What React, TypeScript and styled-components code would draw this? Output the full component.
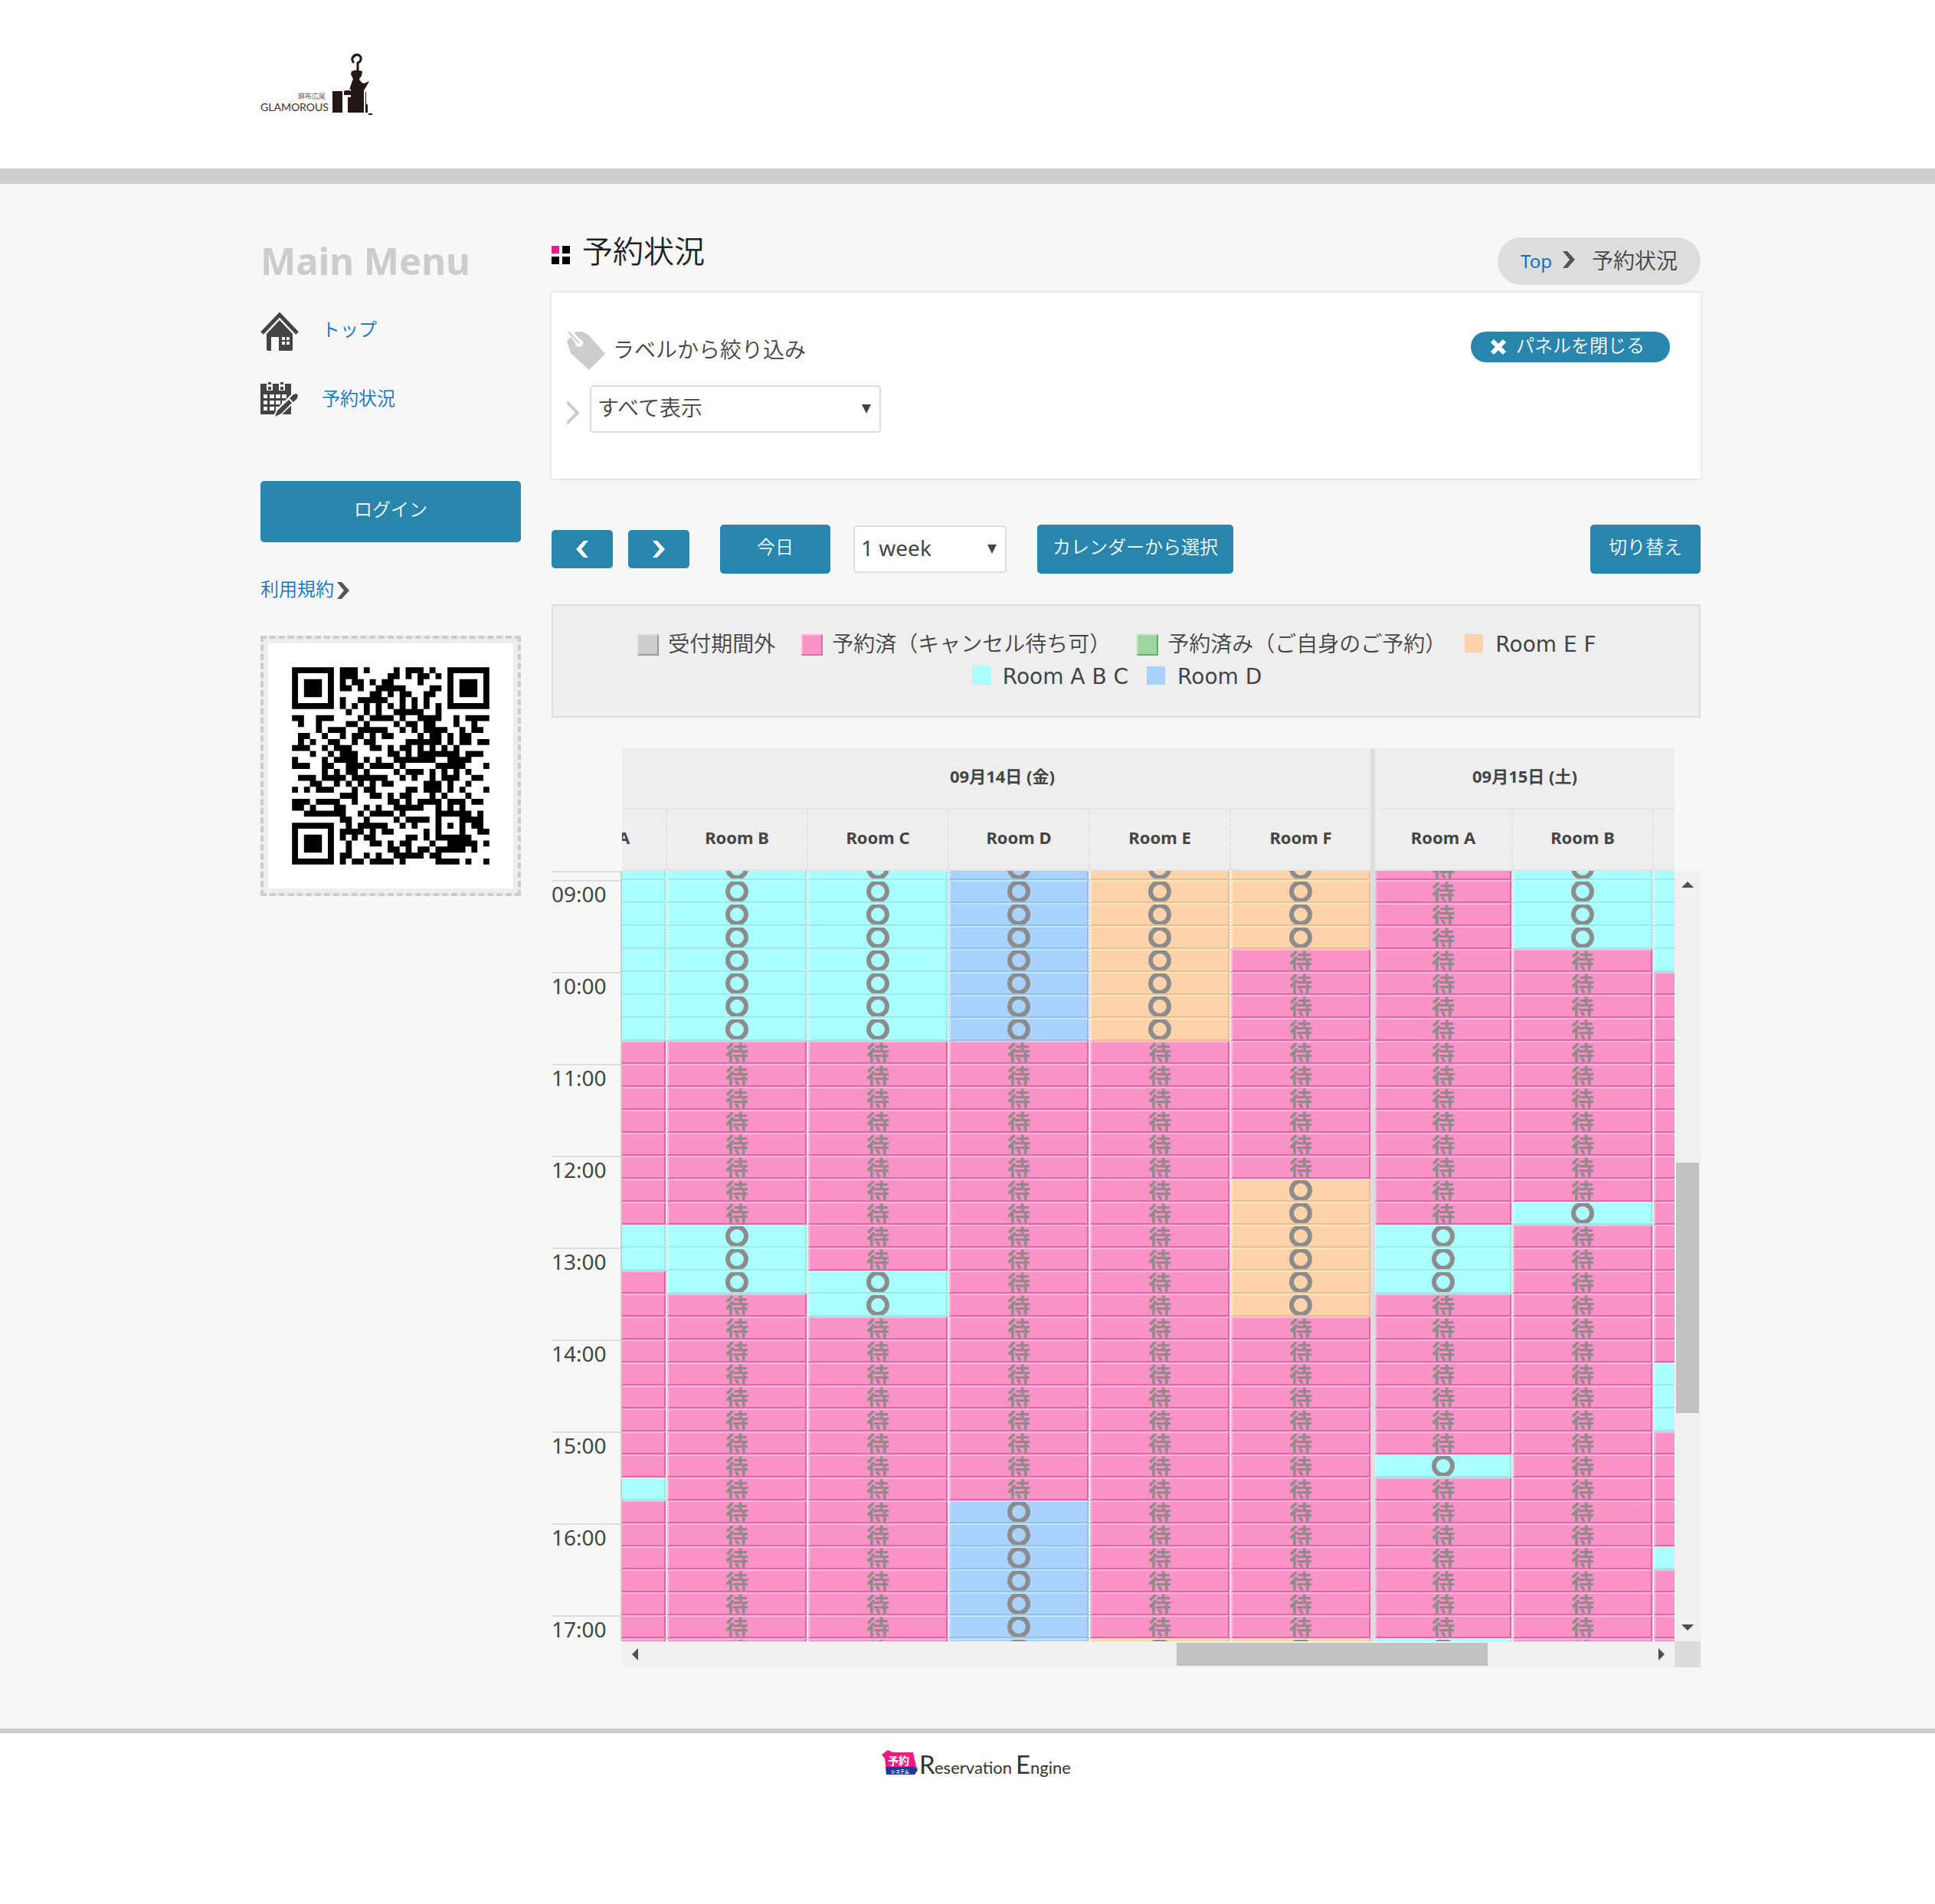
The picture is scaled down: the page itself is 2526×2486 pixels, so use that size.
import React, { useLayoutEffect, useRef } from "react";
import styled, { createGlobalStyle, css } from "styled-components";

const sans = `"Noto Sans", "Noto Sans CJK JP", sans-serif`;
const jp = `"Noto Sans CJK JP", "Noto Sans", sans-serif`;
const wide = `"DejaVu Sans", "Noto Sans CJK JP", sans-serif`;

const GlobalStyle = createGlobalStyle`
  *, *::before, *::after { box-sizing: border-box; }
  body {
    margin: 0;
    background: #fff;
    color: #444;
    font-family: ${sans};
    font-size: 24px;
    line-height: 36px;
  }
  ul, h1, h2, p { margin: 0; padding: 0; }
  ul { list-style: none; }
  svg { display: block; flex: none; }
`;

/* ---------- page frame ---------- */

const Frame = styled.div`
  width: 100%;
  max-width: 1914px;
  margin: 0 auto;
  padding-left: 34px;
`;

const Header = styled.header`
  padding: 70px 0 68px;
  border-bottom: 20px solid #ccc;
`;

const Content = styled.div`
  background: #f7f7f7;
  padding: 70px 0 80px;
`;

const Columns = styled.div`
  display: flex;
  align-items: flex-start;
  gap: 40px;
`;

const Footer = styled.footer`
  border-top: 6px solid #ccc;
  padding: 20px 0 150px;
  display: flex;
  justify-content: center;
`;

const FooterLink = styled.a`
  margin-left: 24px;
`;

/* ---------- sidebar ---------- */

const Sidebar = styled.aside`
  flex: none;
  width: 340px;
`;

const MenuTitle = styled.h2`
  font-size: 49px;
  line-height: 60px;
  color: #ccc;
  font-weight: 700;
`;

const MenuList = styled.ul`
  margin-top: 38px;
  display: grid;
  gap: 40px;
`;

const MenuLink = styled.a`
  display: flex;
  gap: 30px;
  height: 50px;
  color: #0a73c8;
  font-family: ${jp};
  font-weight: 350;
  line-height: 42px;
  text-decoration: none;
`;

const LoginButton = styled.button`
  display: block;
  width: 100%;
  height: 80px;
  margin-top: 80px;
  padding: 0 0 10px;
  border: 0;
  border-radius: 5px;
  background: #2885ac;
  color: #fff;
  font-family: ${jp};
  font-weight: 350;
  font-size: 24px;
`;

const TermsLink = styled.a`
  display: flex;
  align-items: center;
  gap: 4px;
  margin-top: 42px;
  color: #0a73c8;
  font-family: ${jp};
  font-weight: 350;
  text-decoration: none;

  svg { margin-top: 6px; }
`;

const QrFrame = styled.div`
  margin-top: 44px;
  padding: 6px;
  border: 4px dashed #ccc;
  background: #eee;

  svg { width: 100%; height: auto; background: #fff; }
`;

/* ---------- main column ---------- */

const Main = styled.main`
  flex: 1;
  min-width: 0;
`;

const TitleRow = styled.div`
  display: flex;
  justify-content: space-between;
  align-items: flex-start;
  height: 72px;
`;

const PageTitle = styled.h1`
  display: flex;
  align-items: flex-start;
  gap: 16px;
  color: #222;
  font-family: ${jp};
  font-weight: 350;
  font-size: 40px;
  line-height: 32px;

  svg { margin-top: 11px; }
`;

const Crumbs = styled.nav`
  display: flex;
  align-items: center;
  height: 62px;
  padding: 0 30px;
  border-radius: 31px;
  background: #ddd;
  font-size: 24px;

  a { color: #0a73c8; text-decoration: none; }
  svg { margin: 0 22px 4px 14px; }
`;

const CrumbHere = styled.span`
  margin-bottom: 4px;
  font-family: ${jp};
  font-weight: 350;
  font-size: 28px;
`;

const Panel = styled.section`
  display: flex;
  justify-content: space-between;
  align-items: flex-start;
  padding: 51px 40px 60px 20px;
  background: #fff;
  box-shadow: 0 0 4px #ccc;
`;

const FilterForm = styled.div`
  display: grid;
  gap: 20px;
`;

const FilterLabel = styled.label`
  display: flex;
  gap: 10px;
  height: 50px;
  font-family: ${jp};
  font-weight: 350;
  font-size: 28px;
  line-height: 44px;
`;

const FilterRow = styled.div`
  display: flex;
  align-items: center;
  gap: 14px;
  svg { margin-top: 10px; }
`;

const SelectBox = styled.span<{ $width: number; $weight: number }>`
  position: relative;
  display: block;
  width: ${(p) => p.$width}px;

  &::after {
    content: "";
    position: absolute;
    right: 13px;
    top: 25px;
    border: 6px solid transparent;
    border-top: 12px solid #444;
    border-bottom: 0;
    pointer-events: none;
  }

  select {
    appearance: none;
    width: 100%;
    height: 62px;
    padding: 0 30px 4px 8px;
    border: 2px solid #ddd;
    border-radius: 5px;
    background: #fff;
    color: #444;
    font-family: ${sans};
    font-weight: ${(p) => p.$weight};
    font-size: 28px;
  }
`;

const CloseButton = styled.button`
  display: flex;
  align-items: center;
  justify-content: center;
  gap: 12px;
  width: 260px;
  height: 40px;
  padding: 0 8px 0 0;
  border: 0;
  border-radius: 20px;
  background: #2885ac;
  color: #fff;
  font-family: ${jp};
  font-weight: 350;
  font-size: 24px;
  line-height: 36px;
  span { margin-bottom: 6px; }
`;

const Toolbar = styled.div`
  display: flex;
  align-items: center;
  gap: 40px;
  margin-top: 60px;
`;

const ToolGroup = styled.div<{ $gap: number }>`
  display: flex;
  align-items: center;
  gap: ${(p) => p.$gap}px;
`;

const ToolButton = styled.button<{ $width: number; $small?: boolean; $end?: boolean }>`
  display: flex;
  align-items: center;
  justify-content: center;
  width: ${(p) => p.$width}px;
  height: ${(p) => (p.$small ? 50 : 64)}px;
  margin-left: ${(p) => (p.$end ? "auto" : "0")};
  padding: ${(p) => (p.$small ? "0" : "0 0 10px")};
  border: 0;
  border-radius: 5px;
  background: #2885ac;
  color: #fff;
  font-family: ${jp};
  font-weight: 350;
  font-size: 24px;
  white-space: nowrap;
`;

const Legend = styled.ul`
  display: flex;
  flex-wrap: wrap;
  justify-content: center;
  margin-top: 40px;
  padding: 30px 100px;
  border: 2px solid #ddd;
  background: #eee;
`;

const LegendItem = styled.li<{ $status?: boolean; $after?: number }>`
  display: flex;
  align-items: center;
  gap: ${(p) => (p.$status ? 12 : 16)}px;
  margin-right: ${(p) => p.$after ?? 24}px;
  font-family: ${wide};
  font-size: 28px;
  line-height: 42px;
`;

const LegendText = styled.span`
  font-weight: 350;
`;

type Tone = { fill: string; light: string; dark: string };

const Swatch = styled.span<{ $tone: Tone; $flat?: boolean }>`
  width: ${(p) => (p.$flat ? 24 : 28)}px;
  height: ${(p) => (p.$flat ? 24 : 28)}px;
  margin-bottom: ${(p) => (p.$flat ? 4 : 0)}px;
  background: ${(p) => p.$tone.fill};
  ${(p) =>
    !p.$flat &&
    css`
      border: 2px solid;
      border-color: ${p.$tone.light} ${p.$tone.dark} ${p.$tone.dark} ${p.$tone.light};
    `}
`;

/* ---------- calendar ---------- */

const Calendar = styled.section`
  display: grid;
  grid-template-columns: 92px minmax(0, 1fr) 34px;
  grid-template-rows: 80px 80px 1006px 34px;
  margin-top: 40px;
`;

const Dates = styled.div`
  grid-area: 1 / 2;
  display: flex;
  min-width: 0;
  overflow: hidden;
  background: #eee;
  font-weight: 700;
  font-size: 22px;
  line-height: 72px;
  text-align: center;
`;

const DateCell = styled.div<{ $width?: number }>`
  border-bottom: 2px dotted #ddd;
  ${(p) =>
    p.$width
      ? css`
          flex: none;
          width: ${p.$width}px;
          padding-left: 16px;
          border-right: 6px solid #ddd;
        `
      : css`
          flex: 1;
        `}
`;

const Times = styled.ul`
  grid-area: 3 / 1;
  overflow: hidden;
  padding-top: 10px;
  border-top: 2px solid #ddd;
  border-right: 2px solid #ccc;
`;

const Hour = styled.li`
  height: 120px;
  border-top: 2px solid #ddd;
  font-size: 28px;
  line-height: 32px;
`;

const Scroller = styled.div`
  grid-area: 2 / 2 / 4 / 3;
  overflow: hidden;
`;

const Grid = styled.table`
  width: 1652px;
  table-layout: fixed;
  border-collapse: separate;
  border-spacing: 0;
`;

const edge = (last: boolean) => (last ? "6px solid #ddd" : "2px dotted #ddd");

const RoomHead = styled.th<{ $last: boolean }>`
  position: sticky;
  top: 0;
  z-index: 1;
  height: 80px;
  padding: 0 0 6px;
  border-right: ${(p) => edge(p.$last)};
  border-bottom: 2px dotted #ddd;
  background: #eee;
  font-weight: 700;
  font-size: 22px;
`;

const SlotCell = styled.td<{ $last: boolean }>`
  height: 30px;
  padding: 0;
  border-right: ${(p) => edge(p.$last)};
  background: #fff;
`;

const Slot = styled.div<{ $tone: Tone }>`
  display: flex;
  justify-content: center;
  height: 30px;
  overflow: hidden;
  border: 2px solid;
  border-color: ${(p) => `${p.$tone.light} ${p.$tone.dark} ${p.$tone.dark} ${p.$tone.light}`};
  background: ${(p) => p.$tone.fill};
  color: #8c8c8c;
  font-family: ${jp};
  font-weight: 700;
  font-size: 30px;
  line-height: 26px;
`;

const VBar = styled.div`
  grid-area: 3 / 3;
  display: flex;
  flex-direction: column;
  align-items: center;
  padding: 14px 2px;
  background: #f0f0f0;
`;

const HBar = styled.div`
  grid-area: 4 / 2;
  display: flex;
  align-items: center;
  padding: 2px 13px;
  background: #f0f0f0;
`;

const Track = styled.div<{ $vertical?: boolean }>`
  flex: 1;
  align-self: stretch;
  display: flex;
  flex-direction: ${(p) => (p.$vertical ? "column" : "row")};
`;

const Gap = styled.div<{ $share: number }>`
  flex: ${(p) => p.$share} 0 0;
`;

const Thumb = styled.div<{ $share: number }>`
  flex: ${(p) => p.$share} 0 0;
  background: #c1c1c1;
`;

const Corner = styled.div`
  grid-area: 4 / 3;
  background: #dcdcdc;
`;

/* ---------- data ---------- */

const tones: Record<string, Tone> = {
  x: { fill: "#cccccc", light: "#dddddd", dark: "#999999" },
  p: { fill: "#fb93c7", light: "#fdbadb", dark: "#e066a5" },
  g: { fill: "#a0d4a0", light: "#b4e2b4", dark: "#5ab35f" },
  c: { fill: "#aaffff", light: "#bbffff", dark: "#96eceb" },
  b: { fill: "#aad2ff", light: "#bbe6ff", dark: "#96beeb" },
  o: { fill: "#fed2aa", light: "#ffe6bb", dark: "#ebbe96" },
};

const HOURS = [9, 10, 11, 12, 13, 14, 15, 16, 17];
const ROWS = 35;

// Open slots of each room, counted in quarter hours from 08:45 (end excluded).
// A bare column is one whose middle is scrolled out of view, so it needs no marks.
type Column = { room: string; tone: string; bare?: boolean; open: [number, number][] };
const columns: Column[] = [
  { room: "A", tone: "c", bare: true, open: [[0, 8], [16, 18], [27, 28]] },
  { room: "B", tone: "c", open: [[0, 8], [16, 19]] },
  { room: "C", tone: "c", open: [[0, 8], [18, 20]] },
  { room: "D", tone: "b", open: [[0, 8], [28, 35]] },
  { room: "E", tone: "o", open: [[0, 8], [34, 35]] },
  { room: "F", tone: "o", open: [[0, 4], [14, 20], [34, 35]] },
  { room: "A", tone: "c", open: [[16, 19], [26, 27], [34, 35]] },
  { room: "B", tone: "c", open: [[0, 4], [15, 16]] },
  { room: "C", tone: "c", bare: true, open: [[0, 5], [22, 25], [30, 31]] },
];
const widths: Record<string, number> = { A: 180, B: 184, C: 184, D: 184, E: 184, F: 188 };

const qrRows = [
  "0-6 8-10 12 17 19-21 23 26-32",
  "0 6 8-10 16-17 19 21-22 24 26 32",
  "0 2-4 6 8 10-11 13 15-16 21 26 28-30 32",
  "0 2-4 6 8-9 11 14-18 23-24 26 28-30 32",
  "0 2-4 6 13-14 16 18-19 22-23 26 28-30 32",
  "0 6 8 11-15 18 20 22 26 32",
  "0-6 8 10 12 14 16 18 20 22 24 26-32",
  "9 12 14 17-21 24",
  "0-1 4-6 11 13-16 18 21-24 27 29-32",
  "1 4 9-10 12 17 19-20 22-23 27 30",
  "4 6-8 11-15 18 20 22-25 28 30-31",
  "1-2 5 8 10-11 13 15-16 21 23-24 26 28-29",
  "1 3 6-7 10 12-13 19-24 26 28-29 31-32",
  "0-2 5 7-9 13-14 16 18-19 21 23 25 27",
  "3 6 8-10 16-17 19 21-27 29-31",
  "0 5 7-10 12 14 17-23 26-29",
  "0-2 5-6 9-11 13-16 18 24-28 32",
  "5 7 9-10 12 17 19-21 23 25 27 29",
  "1-3 5-8 10-15 18 20 23 25-27 30-31",
  "3-4 7 9 11 13 15-16 22-24 26 29",
  "0 2 4-6 10 12-13 19-20 22-24 26 28 32",
  "8-10 13-14 16 18-19 23 25 29",
  "0-2 4-7 10 16-17 19 21-24 26-28 30-31",
  "0-1 3 7-8 12 14 17-21 24 26 28",
  "2-8 11 13-16 18 24-29 31",
  "8-9 12 17 19-22 24 28-31",
  "0-6 9 11-15 18 20 24 26 28 30-31",
  "0 6 8-11 13 15-16 22 24 28 31-32",
  "0 2-4 6 8 10 12-13 19-20 22 24-29",
  "0 2-4 6 9 13-14 16 18-19 23 26-30 32",
  "0 2-4 6 9 16-17 19 21-22 24-28 30",
  "0 6 8-9 12 14 17-21 23-24",
  "0-6 8 10-11 13-16 18 24-27 29 32",
];
const qrPath = qrRows
  .map((row, y) =>
    row
      .split(" ")
      .map((run) => {
        const [a, b = a] = run.split("-").map(Number);
        return `M${a + 4} ${y + 4}h${b - a + 1}v1h-${b - a + 1}z`;
      })
      .join("")
  )
  .join("");

/* ---------- drawings ---------- */

const Chevron = ({ color = "#555", left = false }: { color?: string; left?: boolean }) => (
  <svg width="16" height="22" viewBox="0 0 16 22" aria-hidden="true">
    <path d={left ? "M16 0h-6L0 11l10 11h6L7 11z" : "M0 0h6l10 11L6 22H0l9-11z"} fill={color} />
  </svg>
);

const HomeIcon = () => (
  <svg width="50" height="50" viewBox="0 0 50 50" aria-hidden="true">
    <path d="M2 27 25 3l23 24" fill="none" stroke="#444" strokeWidth="5" />
    <path
      fill="#444"
      fillRule="evenodd"
      d="M25 10 42 28v20q0 2-2 2H24V32H14v18h-4q-2 0-2-2V28zM28 32v4h4v-4zM34 32v4h4v-4zM28 38v4h4v-4zM34 38v4h4v-4z"
    />
  </svg>
);

const BookingIcon = () => (
  <svg width="50" height="50" viewBox="0 0 50 50" aria-hidden="true">
    <path
      fill="#444"
      fillRule="evenodd"
      d="M0 3h8v9h8V3h8v9h8V3h8v40H0zM4 17v5h5v-5zM12 17v5h6v-5zM20 17v5h6v-5zM28 17v5h6v-5zM4 25v5h5v-5zM12 25v5h6v-5zM20 25v5h6v-5zM28 25v5h6v-5zM4 33v5h5v-5zM12 33v5h6v-5zM20 33v5h6v-5z"
    />
    <path fill="#444" d="M10 1h4v3h-4zM10 7h4v4h-4zM26 1h4v3h-4zM26 7h4v4h-4z" />
    <path d="m16 48 5-12 20-20 7-2 2 4-3 7-20 19z" fill="#fff" />
    <path d="m19 46 3-8 15-14 4 4-14 14zM38 22l5-5 4-1 2 2-1 4-5 5z" fill="#444" />
  </svg>
);

const TagIcon = () => (
  <svg width="50" height="50" viewBox="0 0 50 50" aria-hidden="true">
    <path d="M0 12 12 0h8l9 5 21 24-21 21L5 28z" fill="#ccc" />
    <circle cx="16" cy="15" r="5" fill="#fff" />
    <path d="M3-1 16 15" stroke="#fff" strokeWidth="7" />
    <path d="M1-1 16 15" stroke="#ccc" strokeWidth="2" />
  </svg>
);

const CloseIcon = () => (
  <svg width="22" height="22" viewBox="0 0 22 22" aria-hidden="true">
    <path d="M3 3 19 19M19 3 3 19" stroke="#fff" strokeWidth="6" />
  </svg>
);

const TitleMark = () => (
  <svg width="24" height="24" viewBox="0 0 24 24" aria-hidden="true">
    <path d="M0 0h10v10H0z" fill="#e91e8c" />
    <path d="M14 0h10v10H14zM0 14h10v10H0zM14 14h10v10H14z" fill="#000" />
  </svg>
);

const FilterArrow = () => (
  <svg width="16" height="32" viewBox="0 0 16 32" aria-hidden="true">
    <path d="m0 2 14 14L0 30" fill="none" stroke="#ccc" strokeWidth="4" />
  </svg>
);

const Ring = () => (
  <svg width="30" height="26" viewBox="0 0 30 26" aria-label="予約可">
    <circle cx="15" cy="13" r="12" fill="none" stroke="#8c8c8c" strokeWidth="6" />
  </svg>
);

const Arrow = ({ d, w, h }: { d: string; w: number; h: number }) => (
  <svg width={w} height={h} viewBox={`0 0 ${w} ${h}`} aria-hidden="true">
    <path d={d} fill="#505050" />
  </svg>
);

const BrandLogo = () => (
  <svg width="148" height="82" viewBox="0 0 148 82" role="img" aria-label="GLAMOROUS">
    <text x="49" y="59" fontFamily="Noto Sans CJK JP" fontSize="9" fill="#666">麻布広尾</text>
    <text x="0" y="75" fontFamily="Lato, sans-serif" fontSize="14" fill="#333">GLAMOROUS</text>
    <g fill="#231815">
      <path d="M94 49h13v28H94zM109 49h9v5h-9zM114 57h6v20h-6zM110 48h7v2h-7z" />
      <path d="M119 23q7-3 14 0l-1 6-3 4q1 4 6 6l7-3-5 9-2 3v29h-17V46l-2 1 3-9 2-5-3-6z" />
      <path d="M137 50h1v15l2 2v10h-3zM141 78h5v2h-5z" />
    </g>
    <path
      d="M122 12q-5-6 1-10 6-2 8 3 1 5-4 7M121 5l3-3M127 11v11"
      fill="none"
      stroke="#231815"
      strokeWidth="3"
    />
  </svg>
);

const EngineLogo = () => (
  <svg width="250" height="44" viewBox="0 0 250 44" role="img" aria-label="予約システム Reservation Engine">
    <path d="M1 8 9 2l7 3h26l4 18 2 4-5 4H9L6 22 5 13z" fill="#ec1c7d" />
    <path d="M6 24h37l5 4-4 6H7z" fill="#1d3a96" />
    <text x="9" y="21" fontFamily="Noto Sans CJK JP" fontWeight="700" fontSize="14" fill="#fff">予約</text>
    <text x="13" y="32" fontFamily="Noto Sans CJK JP" fontWeight="700" fontSize="6" fill="#fff">システム</text>
    <g fontFamily="Lato, sans-serif" fill="#333">
      <text x="50" y="33" fontSize="33">R</text>
      <text x="70" y="33" fontSize="22">eservation</text>
      <text x="176" y="33" fontSize="33">E</text>
      <text x="195" y="33" fontSize="22">ngine</text>
    </g>
  </svg>
);

/* ---------- page ---------- */

const CalendarGrid = () => {
  const slots = useRef<HTMLDivElement>(null);

  // Open the timetable just before 09:00, with the first room partly scrolled away.
  useLayoutEffect(() => {
    slots.current?.scrollTo(121, 18);
  }, []);

  return (
    <Calendar>
      <Dates>
        <DateCell $width={983}>09月14日 (金)</DateCell>
        <DateCell>09月15日 (土)</DateCell>
      </Dates>
      <Times>
        {HOURS.map((h) => (
          <Hour key={h}>{String(h).padStart(2, "0")}:00</Hour>
        ))}
      </Times>
      <Scroller ref={slots}>
        <Grid>
          <colgroup>
            {columns.map((c, i) => (
              <col key={i} style={{ width: widths[c.room] }} />
            ))}
          </colgroup>
          <thead>
            <tr>
              {columns.map((c, i) => (
                <RoomHead key={i} scope="col" $last={c.room === "F"}>
                  Room {c.room}
                </RoomHead>
              ))}
            </tr>
          </thead>
          <tbody>
            {Array.from({ length: ROWS }, (_, r) => (
              <tr key={r}>
                {columns.map((c, i) => {
                  const open = c.open.some(([from, to]) => r >= from && r < to);
                  const mark = open ? <Ring /> : "待";
                  return (
                    <SlotCell key={i} $last={c.room === "F"}>
                      <Slot $tone={tones[open ? c.tone : "p"]}>{c.bare ? null : mark}</Slot>
                    </SlotCell>
                  );
                })}
              </tr>
            ))}
          </tbody>
        </Grid>
      </Scroller>
      <VBar>
        <Arrow w={16} h={8} d="M8 0l8 8H0z" />
        <Track $vertical>
          <Gap $share={359} />
          <Thumb $share={327} />
          <Gap $share={276} />
        </Track>
        <Arrow w={16} h={8} d="M0 0h16L8 8z" />
      </VBar>
      <HBar>
        <Arrow w={8} h={16} d="M8 0v16L0 8z" />
        <Track>
          <Gap $share={703} />
          <Thumb $share={406} />
          <Gap $share={223} />
        </Track>
        <Arrow w={8} h={16} d="M0 0l8 8-8 8z" />
      </HBar>
      <Corner />
    </Calendar>
  );
};

export default function App() {
  return (
    <>
      <GlobalStyle />
      <Header>
        <Frame>
          <BrandLogo />
        </Frame>
      </Header>
      <Content>
        <Frame>
          <Columns>
            <Sidebar>
              <MenuTitle>Main Menu</MenuTitle>
              <MenuList>
                <li>
                  <MenuLink href="#top">
                    <HomeIcon />
                    トップ
                  </MenuLink>
                </li>
                <li>
                  <MenuLink href="#status">
                    <BookingIcon />
                    予約状況
                  </MenuLink>
                </li>
              </MenuList>
              <LoginButton type="button">ログイン</LoginButton>
              <TermsLink href="#terms">
                利用規約
                <Chevron />
              </TermsLink>
              <QrFrame>
                <svg viewBox="0 0 41 41" role="img" aria-label="QR">
                  <path d={qrPath} />
                </svg>
              </QrFrame>
            </Sidebar>
            <Main>
              <TitleRow>
                <PageTitle>
                  <TitleMark />
                  予約状況
                </PageTitle>
                <Crumbs>
                  <a href="#top">Top</a>
                  <Chevron />
                  <CrumbHere>予約状況</CrumbHere>
                </Crumbs>
              </TitleRow>
              <Panel>
                <FilterForm>
                  <FilterLabel htmlFor="label-filter">
                    <TagIcon />
                    ラベルから絞り込み
                  </FilterLabel>
                  <FilterRow>
                    <FilterArrow />
                    <SelectBox $width={380} $weight={350}>
                      <select id="label-filter">
                        <option>すべて表示</option>
                      </select>
                    </SelectBox>
                  </FilterRow>
                </FilterForm>
                <CloseButton type="button">
                  <CloseIcon />
                  <span>パネルを閉じる</span>
                </CloseButton>
              </Panel>
              <Toolbar>
                <ToolGroup $gap={20}>
                  <ToolButton type="button" $width={80} $small aria-label="前へ">
                    <Chevron color="#fff" left />
                  </ToolButton>
                  <ToolButton type="button" $width={80} $small aria-label="次へ">
                    <Chevron color="#fff" />
                  </ToolButton>
                </ToolGroup>
                <ToolGroup $gap={30}>
                  <ToolButton type="button" $width={144}>今日</ToolButton>
                  <SelectBox $width={200} $weight={400}>
                    <select aria-label="表示期間">
                      <option>1 week</option>
                    </select>
                  </SelectBox>
                </ToolGroup>
                <ToolButton type="button" $width={256}>カレンダーから選択</ToolButton>
                <ToolButton type="button" $width={144} $end>切り替え</ToolButton>
              </Toolbar>
              <Legend>
                <LegendItem $status $after={34}>
                  <Swatch $tone={tones.x} />
                  <LegendText>受付期間外</LegendText>
                </LegendItem>
                <LegendItem $status $after={34}>
                  <Swatch $tone={tones.p} />
                  <LegendText>予約済（キャンセル待ち可）</LegendText>
                </LegendItem>
                <LegendItem $status>
                  <Swatch $tone={tones.g} />
                  <LegendText>予約済み（ご自身のご予約）</LegendText>
                </LegendItem>
                <LegendItem>
                  <Swatch $tone={tones.o} $flat />
                  Room E F
                </LegendItem>
                <LegendItem>
                  <Swatch $tone={tones.c} $flat />
                  Room A B C
                </LegendItem>
                <LegendItem>
                  <Swatch $tone={tones.b} $flat />
                  Room D
                </LegendItem>
              </Legend>
              <CalendarGrid />
            </Main>
          </Columns>
        </Frame>
      </Content>
      <Footer>
        <FooterLink href="#engine">
          <EngineLogo />
        </FooterLink>
      </Footer>
    </>
  );
}
